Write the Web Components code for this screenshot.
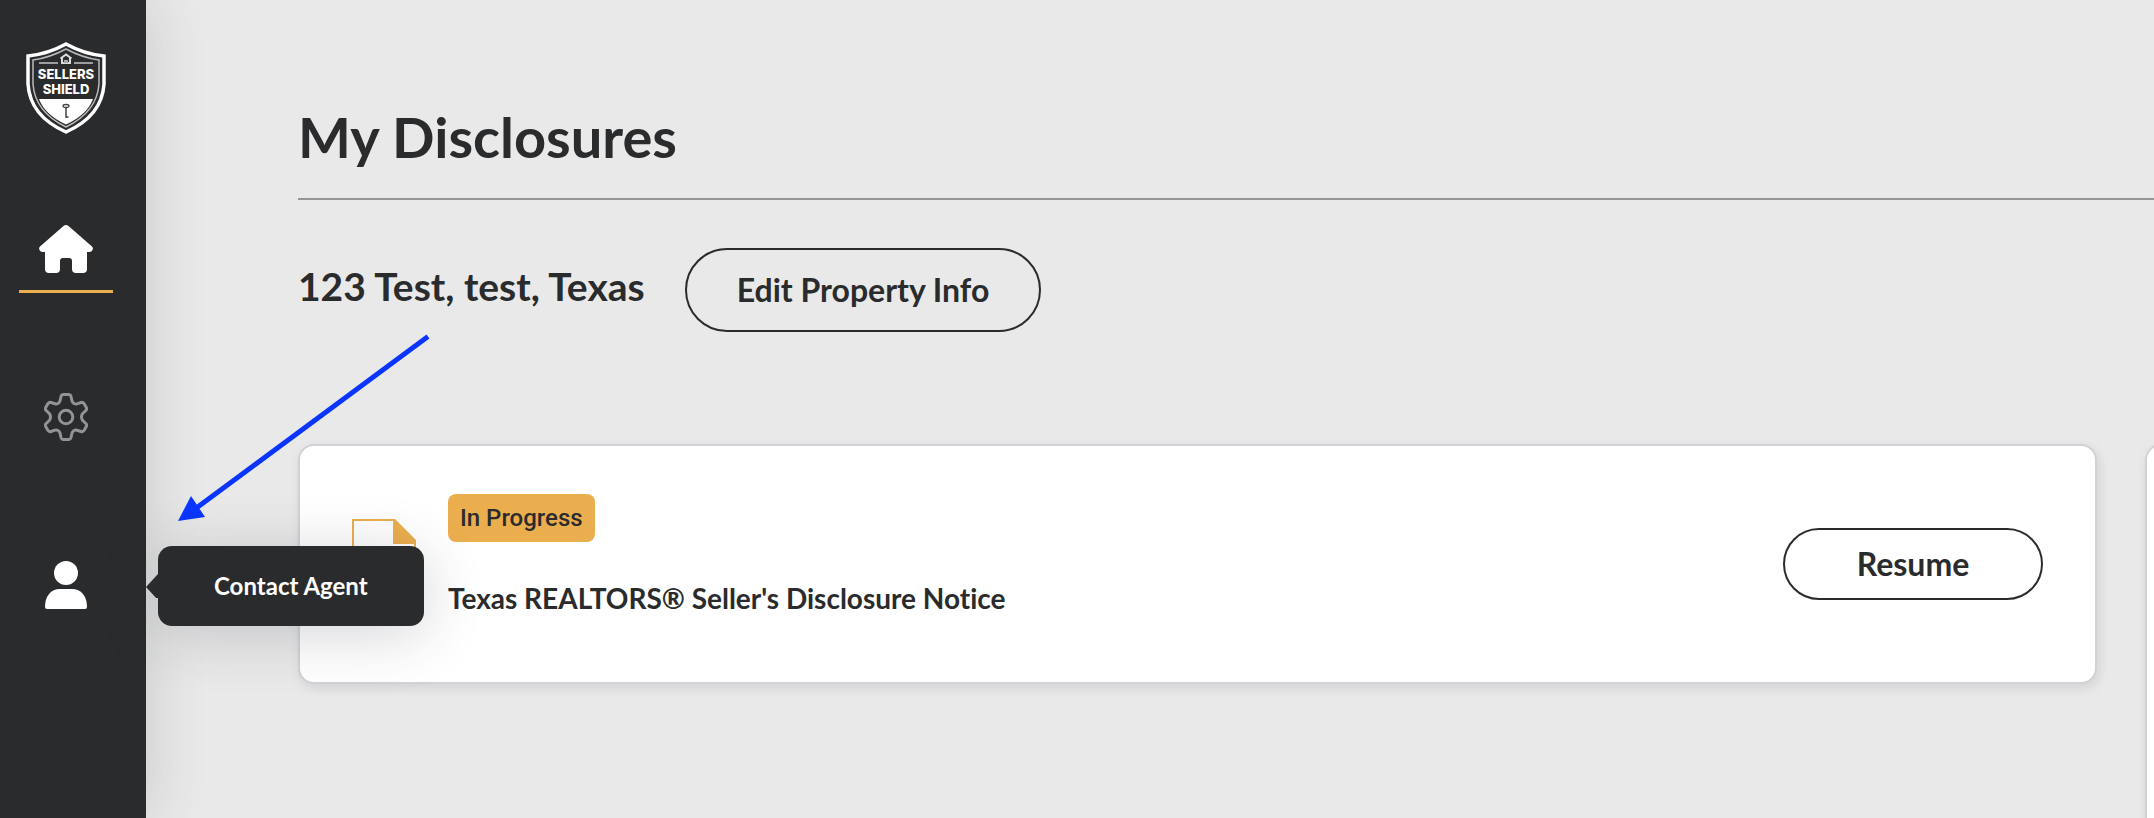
<!DOCTYPE html>
<html lang="en">
<head>
<meta charset="utf-8">
<meta name="viewport" content="width=device-width, initial-scale=1">
<title>My Disclosures</title>
<style>
  html, body { margin: 0; height: 100%; }
  body { background: #e9e9e9; color: #2a2b2d; font-family: Lato, "Open Sans", sans-serif; font-variant-ligatures: none; overflow: hidden; }
</style>
</head>
<body>
<app-shell>
  <side-nav slot="nav">
    <brand-logo slot="brand"></brand-logo>
    <nav-item label="Home" active>
      <svg viewBox="0 0 54 48" width="54" height="48" fill="#fff" aria-hidden="true"><path d="M24.5 1Q27 -1 29.500 1L53 21.500Q54.500 23.200 53.500 25Q52.500 27 50.500 27H48V44Q48 48 44 48H37Q33 48 33 44V36Q33 33 30 33H24Q21 33 21 36V44Q21 48 17 48H10Q6 48 6 44V27H3.500Q1.500 27 .5 25Q-.5 23.200 1 21.500Z"/></svg>
    </nav-item>
    <nav-item label="Settings">
      <svg viewBox="0 0 44 48" width="44" height="48" fill="none" stroke="#929394" stroke-width="3" stroke-linejoin="round" aria-hidden="true"><path d="M19.500 1.500H24.500Q26.500 1.500 27 3.500L28 8Q28.500 9.500 30 10.500Q31.500 11.300 33 10.800L37 9.500Q39 9 40 10.500L42.300 14.500Q43.200 16.200 41.800 17.500L38.500 20.800Q37.500 22 37.500 24Q37.500 26 38.500 27.200L41.800 30.500Q43.200 31.800 42.300 33.500L40 37.500Q39 39 37 38.500L33 37.200Q31.500 36.700 30 37.500Q28.500 38.500 28 40L27 44.500Q26.500 46.500 24.500 46.500H19.500Q17.500 46.500 17 44.500L16 40Q15.500 38.500 14 37.500Q12.500 36.700 11 37.200L7 38.500Q5 39 4 37.500L1.700 33.500Q.8 31.800 2.200 30.500L5.500 27.200Q6.500 26 6.500 24Q6.500 22 5.500 20.800L2.200 17.500Q.8 16.200 1.700 14.500L4 10.500Q5 9 7 9.500L11 10.800Q12.500 11.300 14 10.500Q15.500 9.500 16 8L17 3.500Q17.500 1.500 19.500 1.500Z"/><circle cx="22" cy="24" r="6.800"/></svg>
    </nav-item>
    <nav-item label="Contact Agent" tip>
      <svg viewBox="0 0 42 48" width="42" height="48" fill="#fff" aria-hidden="true"><circle cx="21" cy="12" r="12"/><path d="M15 28H27Q34 28 38 33Q42 38 42 46Q42 48 40 48H2Q0 48 0 46Q0 38 4 33Q8 28 15 28Z"/></svg>
    </nav-item>
  </side-nav>
  <page-heading>My Disclosures</page-heading>
  <property-bar>
    <span slot="address">123 Test, test, Texas</span>
    <pill-button>Edit Property Info</pill-button>
  </property-bar>
  <card-strip>
    <disclosure-card status="In Progress">Texas REALTORS® Seller's Disclosure Notice</disclosure-card>
    <side-card></side-card>
  </card-strip>
  <pointer-arrow slot="overlay"></pointer-arrow>
</app-shell>

<script>
  function define(name, html, setup) {
    const template = document.createElement('template');
    template.innerHTML = html;
    customElements.define(name, class extends HTMLElement {
      constructor() {
        super();
        this.attachShadow({ mode: 'open' }).append(template.content.cloneNode(true));
      }
      connectedCallback() { if (setup) setup(this, this.shadowRoot); }
    });
  }

  define('app-shell', `
    <style>
      :host { display: flex; position: relative; height: 100vh; overflow: hidden; }
      main { flex: 1; min-width: 0; padding: 103px 0 0 152px; }
    </style>
    <slot name="nav"></slot>
    <main><slot></slot></main>
    <slot name="overlay"></slot>`);

  define('side-nav', `
    <style>
      :host { display: block; position: relative; z-index: 2; flex: none; background: #2a2b2d; box-shadow: 0 0 60px rgba(60, 66, 66, .2); }
      nav { display: flex; flex-direction: column; align-items: center; gap: 100px; padding: 42px 33px 0 19px; }
      .brand { display: block; margin-bottom: -9px; }
    </style>
    <nav aria-label="Main"><a class="brand" href="#" aria-label="Sellers Shield"><slot name="brand"></slot></a><slot></slot></nav>`);

  define('brand-logo', `
    <style>
      :host { display: block; }
      svg { display: block; }
      text { font-family: Inter, sans-serif; font-weight: 800; font-size: 13px; fill: #fff; text-anchor: middle; }
    </style>
    <svg width="80" height="92" viewBox="0 0 80 92">
      <path d="M40 2Q58 12 78 14V42Q76 74 40 90Q4 74 2 42V14Q22 12 40 2Z" fill="none" stroke="#fff" stroke-width="3.500"/>
      <path d="M40 7Q57 16 73 18V42Q71 70 40 85Q9 70 7 42V18Q23 16 40 7Z" fill="none" stroke="#b9babb" stroke-width="1.500"/>
      <path d="M13 57H67Q61 73 40 82.500Q19 73 13 57Z" fill="#fff"/>
      <path d="M13 21H32M48 21H67" stroke="#c4c5c6" stroke-width="1.500"/>
      <path d="M34.500 16.500L40 12.500L45.500 16.500M36 16V21H44V16" fill="none" stroke="#ddd" stroke-width="2"/>
      <path d="M38 18H42V21H38Z" fill="#aaa"/>
      <text x="40" y="37">SELLERS</text>
      <text x="40" y="52">SHIELD</text>
      <ellipse cx="40" cy="64" rx="3" ry="1.500" fill="none" stroke="#444" stroke-width="1.300"/>
      <path d="M40 65V76M40 75H42.500" fill="none" stroke="#444" stroke-width="1.500"/>
    </svg>`);

  define('nav-item', `
    <style>
      :host { display: block; position: relative; width: 94px; }
      a { display: flex; flex-direction: column; align-items: center; gap: 17px; height: 65px; border-bottom: 3px solid transparent; }
      :host([active]) a { border-color: #ecaf4f; }
      .tip { display: none; position: absolute; left: 139px; top: -15px; padding: 24px 56px; border-radius: 14px; background: #2a2b2d; color: #fff; font-size: 24px; font-weight: 700; line-height: 32px; white-space: nowrap; box-shadow: 0 8px 60px rgba(40, 44, 60, .2); }
      .tip::before { content: ""; position: absolute; left: -12px; top: 28px; width: 12px; height: 24px; background: #2a2b2d; clip-path: polygon(100% 0, 0 54%, 84% 100%, 100% 100%); }
      :host([tip]) .tip { display: block; }
    </style>
    <a href="#"><slot></slot></a>
    <span class="tip" role="tooltip"></span>`,
    (host, root) => {
      root.querySelector('a').setAttribute('aria-label', host.getAttribute('label'));
      if (host.hasAttribute('tip')) root.querySelector('.tip').textContent = host.getAttribute('label');
    });

  define('page-heading', `
    <style>
      :host { display: block; border-bottom: 2px solid #959595; padding-bottom: 27px; }
      h1 { margin: 0; font-size: 56px; font-weight: 700; line-height: 68px; }
    </style>
    <h1><slot></slot></h1>`);

  define('property-bar', `
    <style>
      :host { display: flex; align-items: center; gap: 40px; padding: 48px 0 112px; }
      h2 { margin: 0; padding-bottom: 8px; font-size: 39px; font-weight: 700; line-height: 48px; }
    </style>
    <h2><slot name="address"></slot></h2><slot></slot>`);

  define('pill-button', `
    <style>
      :host { display: block; flex: none; }
      button { display: block; box-sizing: border-box; padding: 20px 50px; border: 2px solid #2a2b2d; border-radius: 42px; background: transparent; color: inherit; font: 700 32px/40px Lato, sans-serif; }
      :host([compact]) button { min-width: 260px; padding: 14px 24px; }
    </style>
    <button type="button"><slot></slot></button>`);

  define('card-strip', `
    <style>
      :host { display: flex; align-items: flex-start; gap: 48px; }
    </style>
    <slot></slot>`);

  define('disclosure-card', `
    <style>
      :host { display: flex; align-items: center; gap: 32px; box-sizing: border-box; flex: 0 0 calc(100% - 57px); min-height: 240px; padding: 0 52px; border: 2px solid #cfd3d8; border-radius: 16px; background: #fff; box-shadow: 2px 4px 12px rgba(0, 0, 0, .1); }
      svg { flex: none; }
      .info { flex: 1; display: flex; flex-direction: column; align-items: flex-start; gap: 39px; padding-bottom: 19px; }
      .badge { padding: 8px 12px; border-radius: 8px; background: #ebae4f; font: 500 24px/32px Roboto, sans-serif; }
      h3 { margin: 0; font-size: 28px; font-weight: 700; line-height: 34px; }
    </style>
    <svg width="64" height="90" viewBox="0 0 64 90" aria-hidden="true"><path d="M1 1H42L63 23V89H1Z" fill="#fff" stroke="#ebae4f" stroke-width="2"/><path d="M41 0H43L64 21V25H41Z" fill="#ebae4f"/></svg>
    <div class="info"><span class="badge"></span><h3><slot></slot></h3></div>
    <pill-button compact>Resume</pill-button>`,
    (host, root) => { root.querySelector('.badge').textContent = host.getAttribute('status'); });

  define('side-card', `
    <style>
      :host { display: block; box-sizing: border-box; flex: 0 0 560px; min-height: 640px; border: 2px solid #cfd3d8; border-radius: 16px; background: #fff; box-shadow: 2px 4px 12px rgba(0, 0, 0, .1); }
    </style>`);

  define('pointer-arrow', `
    <style>
      :host { display: block; position: absolute; z-index: 3; left: 178px; top: 334px; pointer-events: none; }
      svg { display: block; }
    </style>
    <svg width="254" height="188" viewBox="0 0 254 188" aria-hidden="true"><path d="M17 175L250 2.500" stroke="#0a35ff" stroke-width="5"/><path d="M0 187L13 162L27 183Z" fill="#0a35ff"/></svg>`);
</script>
</body>
</html>
